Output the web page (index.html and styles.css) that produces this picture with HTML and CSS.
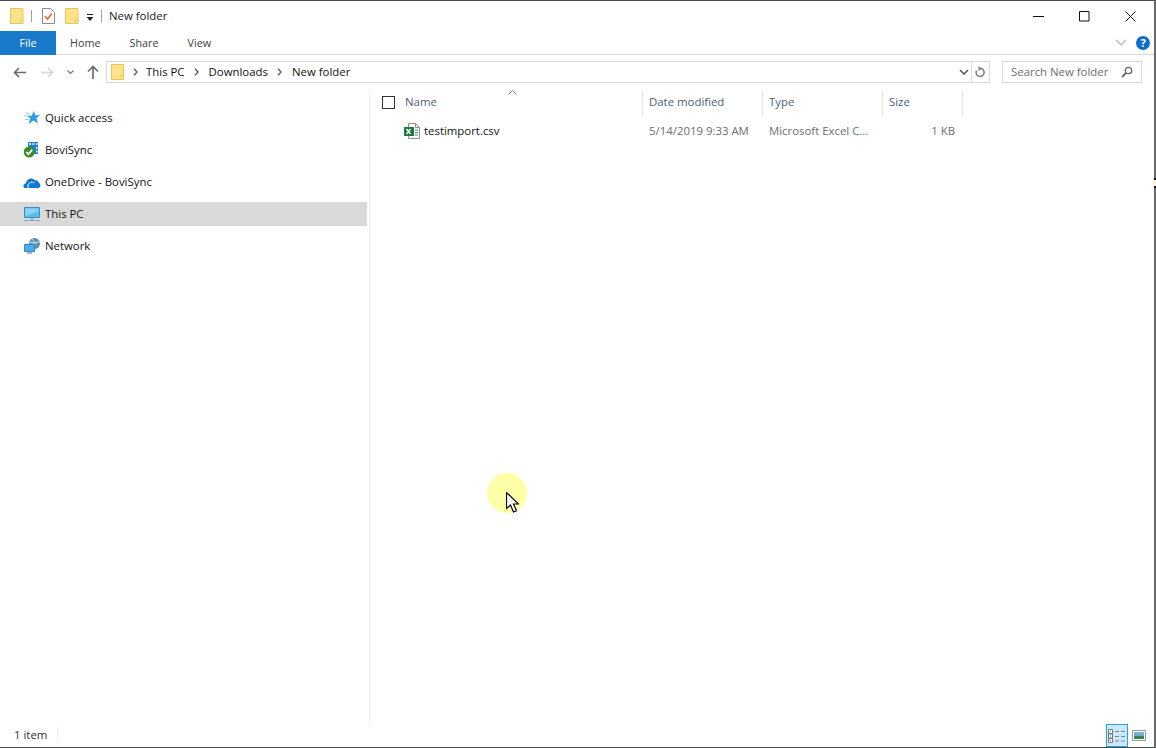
FILE: index.html
```html
<!DOCTYPE html>
<html lang="en">
<head>
<meta charset="utf-8">
<title>New folder</title>
<link rel="stylesheet" href="styles.css">
</head>
<body>
<div class="window">
  <header class="titlebar">
    <svg class="qa-folder" width="14" height="16" viewBox="0 0 14 16"><path d="M.5.5h12.500v15H.5z" fill="#fce38a" stroke="#eac65a"/><path d="M10.500 11.500h2.500v4h-2.500z" fill="#fff3c4" stroke="#eac65a"/></svg>
    <span class="sep sep-a"></span>
    <svg class="qa-check" width="13" height="16" viewBox="0 0 13 16"><path d="M.5.5h8l4 4v11H.5z" fill="#fff" stroke="#8a8a8a"/><path d="M3 8l2.500 3L10 5.500" fill="none" stroke="#e8632a" stroke-width="1.500"/></svg>
    <svg class="qa-folder2" width="14" height="16" viewBox="0 0 14 16"><path d="M.5.5h12.500v15H.5z" fill="#fce38a" stroke="#eac65a"/><path d="M10.500 11.500h2.500v4h-2.500z" fill="#fff3c4" stroke="#eac65a"/></svg>
    <svg class="qa-drop" width="8" height="7" viewBox="0 0 8 7"><path d="M1 0h6v1H1zM.5 3h7L4 7z" fill="#222"/></svg>
    <span class="sep sep-b"></span>
    <span class="title">New folder</span>
    <div class="controls">
      <svg width="11" height="11" viewBox="0 0 11 11"><path d="M0 5.500h11" stroke="#111"/></svg>
      <svg width="11" height="11" viewBox="0 0 11 11"><path d="M.5.500h9.500v9.500H.5z" fill="none" stroke="#111"/></svg>
      <svg width="11" height="11" viewBox="0 0 11 11"><path d="M.5.500l10 10M10.500.500l-10 10" stroke="#111" fill="none"/></svg>
    </div>
  </header>

  <nav class="ribbon">
    <span class="tab tab-file">File</span>
    <span class="tab tab-home">Home</span>
    <span class="tab tab-share">Share</span>
    <span class="tab tab-view">View</span>
    <div class="ribbon-right">
      <svg width="12" height="7" viewBox="0 0 12 7"><path d="M1 1l5 5 5-5" fill="none" stroke="#b4b4b4" stroke-width="1.200"/></svg>
      <span class="help">?</span>
    </div>
  </nav>

  <div class="addressrow">
    <div class="navbtns">
      <svg width="13" height="11" viewBox="0 0 13 11"><path d="M6 1L1.500 5.500 6 10M2 5.500h11" fill="none" stroke="#6d6d6d" stroke-width="1.700"/></svg>
      <svg width="13" height="11" viewBox="0 0 13 11"><path d="M7 1l4.500 4.500L7 10M11 5.500H0" fill="none" stroke="#d6d6d6" stroke-width="1.700"/></svg>
      <svg class="nav-drop" width="7" height="5" viewBox="0 0 7 5"><path d="M.5.500l3 3 3-3" fill="none" stroke="#777" stroke-width="1.200"/></svg>
      <svg class="nav-up" width="12" height="14" viewBox="0 0 12 14"><path d="M1 6.500l5-5 5 5M6 2v12" fill="none" stroke="#6d6d6d" stroke-width="1.700"/></svg>
    </div>
    <div class="addressbar">
      <svg class="addr-folder" width="13" height="16" viewBox="0 0 13 16"><path d="M.5.500h12v15H.5z" fill="#fce38a" stroke="#eac65a"/><path d="M10 11.500h2.500v4H10z" fill="#fff3c4" stroke="#eac65a"/></svg>
      <span class="crumb-sep first"><svg width="5" height="8" viewBox="0 0 5 8"><path d="M1 .8L4 4 1 7.200" fill="none" stroke="#666" stroke-width="1.500"/></svg></span>
      <span class="crumb">This PC</span>
      <span class="crumb-sep"><svg width="5" height="8" viewBox="0 0 5 8"><path d="M1 .8L4 4 1 7.200" fill="none" stroke="#666" stroke-width="1.500"/></svg></span>
      <span class="crumb">Downloads</span>
      <span class="crumb-sep"><svg width="5" height="8" viewBox="0 0 5 8"><path d="M1 .8L4 4 1 7.200" fill="none" stroke="#666" stroke-width="1.500"/></svg></span>
      <span class="crumb">New folder</span>
      <span class="addr-spacer"></span>
      <span class="addr-drop"><svg width="10" height="6" viewBox="0 0 10 6"><path d="M1 1l4 4 4-4" fill="none" stroke="#555" stroke-width="1.500"/></svg></span>
      <span class="addr-refresh"><svg width="11" height="13" viewBox="0 0 11 13"><path d="M5 2.500h1a4 4 0 1 1-4.400 2" fill="none" stroke="#7a7a7a" stroke-width="1.500"/><path d="M3.500 0v5l3-2.500z" fill="#7a7a7a"/></svg></span>
    </div>
    <div class="searchbox">
      <span class="search-label">Search New folder</span>
      <svg width="12" height="12" viewBox="0 0 12 12"><circle cx="7.500" cy="4.500" r="3.200" fill="none" stroke="#666" stroke-width="1.300"/><path d="M5 7L1 11" stroke="#666" stroke-width="1.800"/></svg>
    </div>
  </div>

  <main class="content">
    <aside class="sidebar">
      <div class="navitem">
        <svg width="18" height="16" viewBox="0 0 18 16"><path d="M11 1l1.200 4.300H17l-3.600 2.900L15 13.500l-4.600-3-5 3.500 1.900-5.700L4 5.800h4.600z" fill="#2b9be8"/><path d="M3 2.500l4 2M1 6h3.500M2 9.500h3.500" stroke="#8cc6ef" stroke-width="1.200"/></svg>
        <span>Quick access</span>
      </div>
      <div class="navitem">
        <svg width="18" height="16" viewBox="0 0 18 16"><path d="M5 0h10v12H5z" fill="#1f7fd0"/><path d="M6 1h2v2H6zM9.500 1h2v2h-2zM13 1h1.500v2H13zM13 5h1.500v2H13zM13 8.500h1.500v2H13z" fill="#d5ebfa"/><circle cx="6.200" cy="10" r="5.500" fill="#3c8c2c"/><path d="M3.200 10l2.200 2.200L9.200 7.600" fill="none" stroke="#fff" stroke-width="1.700"/></svg>
        <span>BoviSync</span>
      </div>
      <div class="navitem">
        <svg width="18" height="16" viewBox="0 0 18 16"><path d="M1.500 14C0 13.500-.3 10 2.800 9.500 3.500 5 8.500 2.500 12 6.200c2.300-.4 3.600 1 3.800 2.800C18 9.500 17.800 13.500 15.500 14z" fill="#0f78d4"/><path d="M5.200 13.800V10.500C6.500 8 9.500 7.600 11.300 9" fill="none" stroke="#fff"/></svg>
        <span>OneDrive - BoviSync</span>
      </div>
      <div class="navitem selected">
        <svg width="18" height="16" viewBox="0 0 18 16"><path d="M1.500 1.500h15v10h-15z" fill="#58bdf5" stroke="#3f8fc0"/><path d="M2.500 2.500h13v2.500l-13 5z" fill="#8cd4fa"/><path d="M7 12h4v1.500H7z" fill="#9fb6c6"/><path d="M1 14.500h16" stroke="#8fa9bb"/></svg>
        <span>This PC</span>
      </div>
      <div class="navitem">
        <svg width="18" height="16" viewBox="0 0 18 16"><circle cx="11.500" cy="5.500" r="5.500" fill="#5f8fb0"/><path d="M9 1c2 1.500 4 4.500 2 9M6.500 4c3 1.300 7 1.300 10-.5" fill="none" stroke="#d3e6f3"/><path d="M1.500 6.500h10v7h-10z" fill="#45aef0" stroke="#3c85b3"/><path d="M4 15h5" stroke="#8aa3b5" stroke-width="1.500"/></svg>
        <span>Network</span>
      </div>
    </aside>

    <section class="filepane">
      <div class="sort-caret"><svg width="9" height="5" viewBox="0 0 9 5"><path d="M.5 4.500l4-4 4 4" fill="none" stroke="#777"/></svg></div>
      <div class="colhead">
        <span class="checkcell"><span class="checkbox"></span></span>
        <span class="col col-name"><span class="lift">Name</span></span>
        <span class="col"><span class="lift">Date modified</span></span>
        <span class="col"><span class="lift">Type</span></span>
        <span class="col"><span class="lift">Size</span></span>
      </div>
      <div class="filerow">
        <span class="filename">
          <svg width="16" height="16" viewBox="0 0 16 16"><path d="M4.500.500h7l4 4v11h-11z" fill="#fff" stroke="#8e8e8e"/><path d="M11.500.500v4h4" fill="none" stroke="#8e8e8e"/><path d="M0 4h10v9H0z" fill="#1d7a43"/><path d="M2.500 6l4 5M6.500 6l-4 5" stroke="#fff" stroke-width="1.300"/><path d="M11 7h3M11 9.500h3M11 12h3" stroke="#2c9a5a"/></svg>
          <span class="lift">testimport.csv</span>
        </span>
        <span class="cell lift">5/14/2019 9:33 AM</span>
        <span class="cell lift">Microsoft Excel C...</span>
        <span class="cell cell-size lift">1 KB</span>
      </div>
    </section>
  </main>

  <footer class="statusbar">
    <span class="count">1 item</span>
    <div class="viewbtns">
      <span class="viewbtn active"><svg width="18" height="14" viewBox="0 0 18 14"><path d="M.5.500h4v4h-4zM.5 5h4v4h-4z" fill="#fff" stroke="#777"/><path d="M.5 9.500h4v4h-4z" fill="#fff" stroke="#777"/><path d="M2 2h1v1H2z" fill="#c9a227"/><path d="M2 6.500h1v1H2z" fill="#3a78c8"/><path d="M2 11h1v1H2z" fill="#c8303a"/><path d="M7 2.500h4M13 2.500h4M7 7.500h4M13 7.500h4M7 12h4M13 12h4" stroke="#6f8796"/></svg></span>
      <span class="viewbtn"><svg width="14" height="11" viewBox="0 0 14 11"><path d="M.5.500h13v10H.5z" fill="#fff" stroke="#9a9a9a"/><path d="M2 2h10v3.500H2z" fill="#6db3e2"/><path d="M2 5.500h10V9H2z" fill="#3f7f58"/></svg></span>
    </div>
  </footer>

  <span class="grip" aria-hidden="true"></span>

  <div class="cursor-spot" aria-hidden="true">
    <svg width="13" height="22" viewBox="0 0 13 22"><path d="M.5.500v16l4-3.500 3 7 3-1.300-3-6.700h5z" fill="#fff" stroke="#000" stroke-width="1.200"/></svg>
  </div>
</div>
</body>
</html>
```

FILE: styles.css
```css
* { box-sizing: border-box; }
html, body { margin: 0; height: 100%; }
body { background: #fff; font-family: "Open Sans", "Noto Sans", "Liberation Sans", sans-serif; font-size: 11.4px; color: #000; overflow: hidden; }
svg { display: block; flex: none; }

.window { position: relative; width: 1156px; height: 748px; display: flex; flex-direction: column; border-top: 1px solid #4a4a4a; border-right: 2px solid #6a6a6a; border-bottom: 1px solid #4a4a4a; background: #fff; }

.titlebar { height: 30px; flex: none; display: flex; align-items: center; padding-left: 10px; }
.sep { width: 1px; height: 12px; background: #a0a0a0; flex: none; }
.sep-a { margin-left: 7px; }
.qa-check { margin-left: 10px; }
.qa-folder2 { margin-left: 10px; }
.qa-drop { margin-left: 7px; margin-top: 2px; }
.sep-b { margin-left: 7px; }
.title { margin-left: 7px; margin-top: -2px; color: #1a1a1a; }
.controls { margin-left: auto; display: flex; gap: 35px; padding-right: 18px; }

.ribbon { height: 24px; flex: none; display: flex; align-items: center; border-bottom: 1px solid #dadada; color: #3c3c3c; font-size: 10.8px; }
.tab { line-height: 23px; }
.tab-file { width: 56px; height: 24px; margin-bottom: -1px; background: #1979ca; color: #fff; text-align: center; line-height: 24px; }
.tab-home { margin-left: 14px; }
.tab-share { margin-left: 29px; }
.tab-view { margin-left: 29px; }
.ribbon-right { margin-left: auto; display: flex; align-items: center; gap: 9px; padding-right: 4px; }
.help { width: 14px; height: 14px; border-radius: 50%; background: #0d6fcb; color: #fff; font-weight: 700; font-size: 11px; line-height: 14px; text-align: center; }

.addressrow { height: 35px; flex: none; display: flex; align-items: center; padding-bottom: 1px; }
.navbtns { width: 106px; flex: none; display: flex; align-items: center; padding-left: 13px; }
.navbtns svg + svg { margin-left: 15px; }
.navbtns .nav-drop { margin-left: 13px; }
.navbtns .nav-up { margin-left: 13px; }
.addressbar { width: 884px; height: 22px; flex: none; display: flex; align-items: center; border: 1px solid #d9d9d9; padding-left: 4px; color: #111; }
.crumb { margin-top: -2px; }
.crumb-sep { width: 24px; display: flex; justify-content: center; flex: none; }
.crumb-sep.first { width: 22px; }
.addr-spacer { flex: 1; }
.addr-drop { width: 16px; height: 20px; display: flex; align-items: center; justify-content: center; border-right: 1px solid #d9d9d9; }
.addr-refresh { width: 17px; height: 20px; display: flex; align-items: center; justify-content: center; }
.searchbox { width: 140px; height: 22px; margin-left: 12px; flex: none; display: flex; align-items: center; justify-content: space-between; border: 1px solid #d9d9d9; padding: 0 8px; color: #6d6d6d; }
.search-label { margin-top: -2px; }

.content { flex: 1; min-height: 0; display: flex; }
.sidebar { width: 370px; flex: none; border-right: 1px solid #f0f0f0; padding-top: 16px; }
.navitem { height: 24px; margin-bottom: 8px; margin-right: 2px; display: flex; align-items: center; gap: 4px; padding-left: 23px; color: #111; }
.navitem span { margin-top: -1px; }
.navitem.selected { background: #d9d9d9; }

.filepane { position: relative; flex: 1; min-width: 0; }
.sort-caret { position: absolute; left: 138px; top: 0; }
.lift { margin-top: -2px; }
.colhead { height: 26px; display: grid; grid-template-columns: 34px 239px 120px 120px 80px; color: #4c607a; }
.col { display: flex; align-items: center; padding-left: 6px; border-right: 1px solid #e5e5e5; height: 25px; }
.col-name { padding-left: 1px; }
.checkcell { display: flex; align-items: center; padding-left: 12px; height: 25px; }
.checkbox { width: 13px; height: 13px; border: 1px solid #333; }
.filerow { height: 22px; margin-top: 4px; display: grid; grid-template-columns: 272px 120px 120px 80px; align-items: center; color: #6d6d6d; }
.filename { display: flex; align-items: center; gap: 4px; padding-left: 34px; color: #111; }
.cell { padding-left: 7px; }
.cell-size { text-align: right; padding-right: 7px; }

.statusbar { height: 23px; flex: none; display: flex; align-items: center; justify-content: space-between; padding-left: 14px; color: #333; }
.count { border-right: 1px solid #f0f0f0; padding-right: 10px; margin-top: -2px; }
.viewbtns { display: flex; align-items: center; padding-right: 4px; }
.viewbtn { width: 22px; height: 23px; display: flex; align-items: center; justify-content: center; }
.viewbtn.active { background: #cce8ff; border: 1px solid #29a0da; }

.grip { position: absolute; right: -2px; top: 177px; width: 2px; height: 10px; background: #f5efcf; border-top: 2px solid #111; border-bottom: 2px solid #111; }
.cursor-spot { position: absolute; left: 487px; top: 472px; width: 40px; height: 40px; border-radius: 50%; background: #ffffa8; }
.cursor-spot svg { position: absolute; left: 19px; top: 19px; }
```
